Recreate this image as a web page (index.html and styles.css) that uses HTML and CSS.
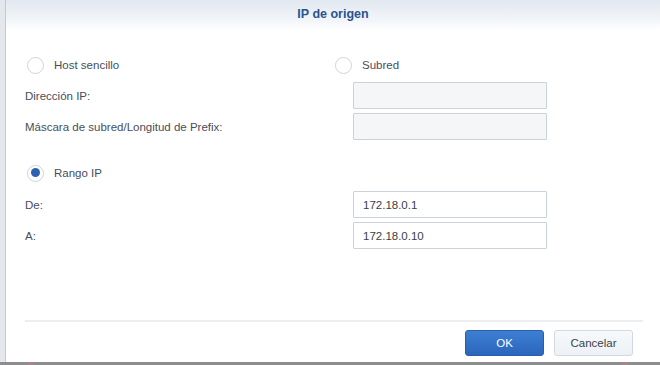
FILE: index.html
```html
<!DOCTYPE html>
<html lang="es">
  <head>
    <meta charset="UTF-8" />
    <meta name="viewport" content="width=device-width, initial-scale=1.0" />
    <title>IP de origen</title>
    <link rel="stylesheet" href="styles.css">
  </head>
  <body>
    <div class="dialog">
      <div class="header">IP de origen</div>

      <div class="content">
        <div class="radio-row first">
          <label class="radio"><span class="dot"></span>Host sencillo</label>
          <label class="radio right"><span class="dot"></span>Subred</label>
        </div>
        <div class="field">
          <span class="label">Dirección IP:</span>
          <input type="text" class="input" disabled />
        </div>
        <div class="field">
          <span class="label">Máscara de subred/Longitud de Prefix:</span>
          <input type="text" class="input" disabled />
        </div>

        <div class="radio-row second">
          <label class="radio"><span class="dot checked"></span>Rango IP</label>
        </div>
        <div class="field">
          <span class="label">De:</span>
          <input type="text" class="input" value="172.18.0.1" />
        </div>
        <div class="field">
          <span class="label">A:</span>
          <input type="text" class="input" value="172.18.0.10" />
        </div>
      </div>

      <div class="footer">
        <button type="button" class="btn primary">OK</button>
        <button type="button" class="btn">Cancelar</button>
      </div>
    </div>
    <div class="bottom-bar"></div>
  </body>
</html>
```

FILE: styles.css
```css
html,
body {
  margin: 0;
  height: 100%;
  overflow: hidden;
}
body {
  font-family: "Liberation Sans", Arial, sans-serif;
  font-size: 11.5px;
  color: #464e5b;
  background-color: #e4e7eb;
}
.dialog {
  margin-left: 5px;
  height: 362px;
  background-color: #fff;
  border-left: 1px solid #c4c9d0;
  display: flex;
  flex-direction: column;
}
.header {
  height: 30px;
  line-height: 29px;
  text-align: center;
  font-size: 12.5px;
  font-weight: bold;
  color: #2a5391;
  background: linear-gradient(#e2e8f0, #f3f6f9 70%, #fff);
}
.content {
  padding: 25px 0 0 19px;
  flex: 1;
}
.radio-row {
  display: flex;
  height: 20px;
  align-items: center;
}
.radio-row.second {
  margin-top: 23px;
}
.radio {
  display: flex;
  align-items: center;
  width: 308px;
}
.radio.right {
  width: auto;
}
.dot {
  box-sizing: border-box;
  width: 17px;
  height: 17px;
  margin: 0 10px 0 2px;
  border: 1.5px solid #cfd4da;
  border-radius: 50%;
  background-color: #fff;
  position: relative;
}
.dot.checked::after {
  content: "";
  position: absolute;
  left: 2.5px;
  top: 2.5px;
  width: 9px;
  height: 9px;
  border-radius: 50%;
  background-color: #2c62b0;
}
.field {
  display: flex;
  align-items: center;
  margin-top: 4px;
}
.radio-row + .field {
  margin-top: 7px;
}
.radio-row.second + .field {
  margin-top: 8px;
}
.label {
  width: 328px;
}
.input {
  box-sizing: border-box;
  width: 194px;
  height: 27px;
  margin: 0;
  padding: 0 9px;
  border: 1px solid #cbd2dc;
  border-radius: 1px;
  background-color: #fff;
  font-family: inherit;
  font-size: 11.5px;
  color: #3a3f47;
}
.input:disabled {
  background-color: #f4f6f8;
}
.footer {
  margin: 0 17px 0 19px;
  height: 42px;
  border-top: 2px solid #eceff2;
  display: flex;
  justify-content: flex-end;
  align-items: flex-start;
  padding: 8px 10px 0 0;
  box-sizing: border-box;
  gap: 10px;
}
.btn {
  box-sizing: border-box;
  width: 79px;
  height: 26px;
  padding: 0;
  border: 1px solid #d3d9e1;
  border-radius: 3px;
  background: linear-gradient(#f7f9fb, #edf1f5);
  font-family: inherit;
  font-size: 11.5px;
  color: #3a3f47;
}
.btn.primary {
  border-color: #2a5ea6;
  background: linear-gradient(#3d7fd4, #2b66bb);
  color: #fff;
}
.bottom-bar {
  height: 3px;
  background: linear-gradient(90deg, #8d8d8d 0, #8d8d8d 28px, #a7858f 28px, #a7858f 34px, #8d8d8d 34px, #8d8d8d 622px, #a7858f 622px, #a7858f 628px, #8d8d8d 628px);
}
```
